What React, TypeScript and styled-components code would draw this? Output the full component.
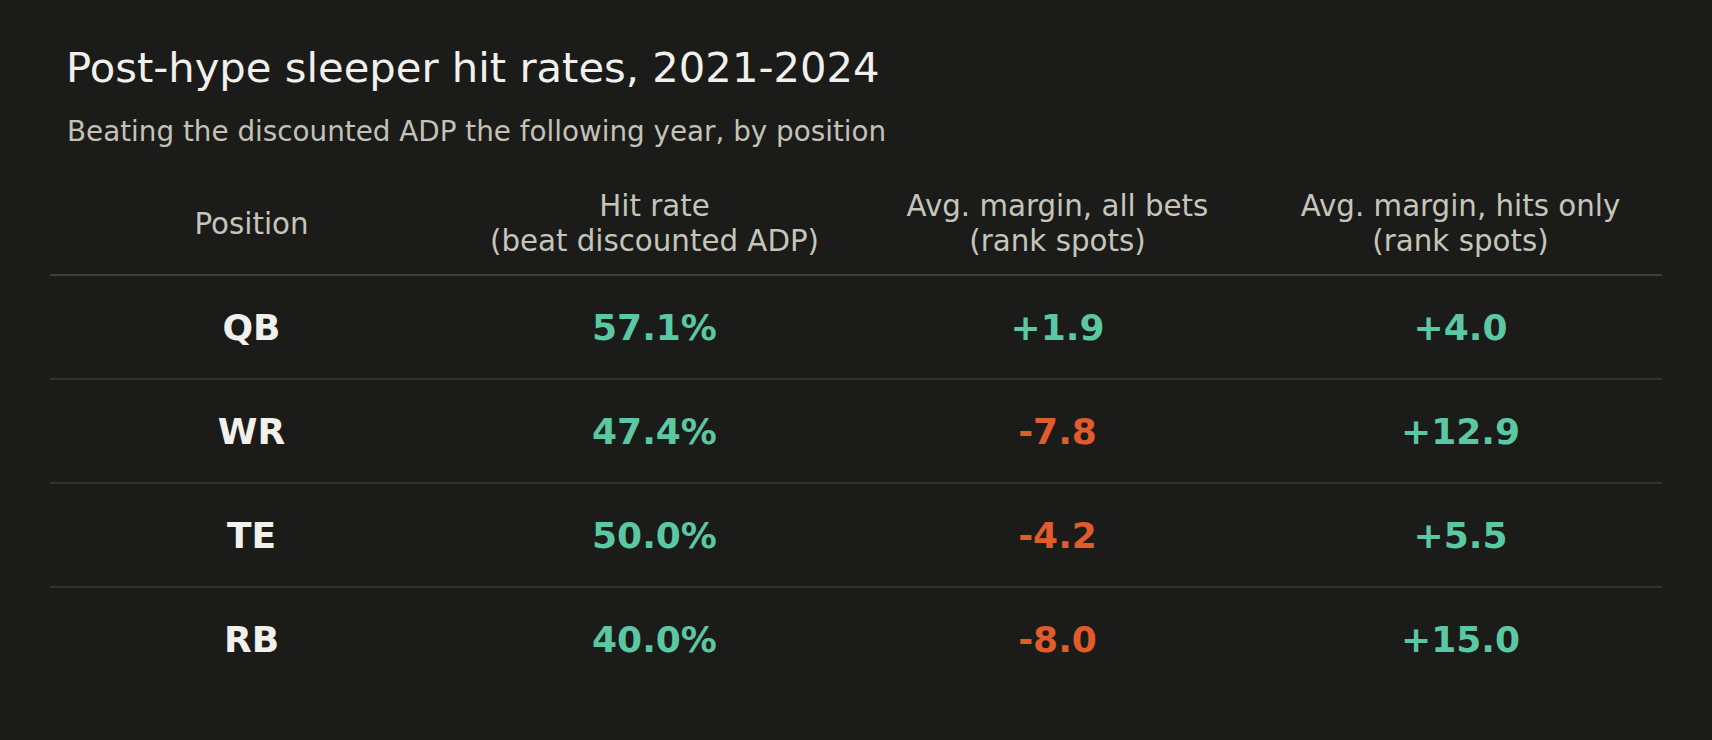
import styled, { createGlobalStyle } from 'styled-components';

type Tone = 'up' | 'down';

const rows: { position: string; hitRate: string; allBets: string; hitsOnly: string }[] = [
  { position: 'QB', hitRate: '57.1%', allBets: '+1.9', hitsOnly: '+4.0' },
  { position: 'WR', hitRate: '47.4%', allBets: '-7.8', hitsOnly: '+12.9' },
  { position: 'TE', hitRate: '50.0%', allBets: '-4.2', hitsOnly: '+5.5' },
  { position: 'RB', hitRate: '40.0%', allBets: '-8.0', hitsOnly: '+15.0' },
];

const toneOf = (value: string): Tone => (value.startsWith('-') ? 'down' : 'up');

const App: React.FC = () => {
  return (
    <Page>
      <GlobalStyle />
      <Title>Post-hype sleeper hit rates, 2021-2024</Title>
      <Subtitle>Beating the discounted ADP the following year, by position</Subtitle>
      <Table>
        <HeaderRow>
          <HeaderCell>Position</HeaderCell>
          <HeaderCell>
            Hit rate
            <br />
            (beat discounted ADP)
          </HeaderCell>
          <HeaderCell>
            Avg. margin, all bets
            <br />
            (rank spots)
          </HeaderCell>
          <HeaderCell>
            Avg. margin, hits only
            <br />
            (rank spots)
          </HeaderCell>
        </HeaderRow>
        {rows.map(row => (
          <Row key={row.position}>
            <PositionCell>{row.position}</PositionCell>
            <ValueCell $tone="up">{row.hitRate}</ValueCell>
            <ValueCell $tone={toneOf(row.allBets)}>{row.allBets}</ValueCell>
            <ValueCell $tone={toneOf(row.hitsOnly)}>{row.hitsOnly}</ValueCell>
          </Row>
        ))}
      </Table>
    </Page>
  );
};

export default App;

const GlobalStyle = createGlobalStyle`
  html, body {
    margin: 0;
    padding: 0;
    background: #1b1b1a;
  }
  body {
    font-family: 'DejaVu Sans', 'Liberation Sans', sans-serif;
  }
`;

const Page = styled.main`
  width: 1712px;
  height: 740px;
  box-sizing: border-box;
  padding: 43px 50px 0;
  background: #1b1b1a;
  overflow: hidden;
`;

const Title = styled.h1`
  margin: 0;
  padding-left: 16px;
  font-size: 41.7px;
  line-height: 50px;
  font-weight: normal;
  color: #f1f0ec;
`;

const Subtitle = styled.p`
  margin: 23px 0 0;
  padding-left: 17px;
  font-size: 27.8px;
  line-height: 32px;
  color: #c3c2b7;
`;

const Table = styled.section`
  margin-top: 24px;
  display: grid;
  grid-template-columns: repeat(4, 1fr);
`;

const HeaderRow = styled.div`
  display: contents;
`;

const HeaderCell = styled.div`
  display: flex;
  align-items: center;
  justify-content: center;
  padding: 17px 0 15px;
  border-bottom: 2px solid #3d3d3b;
  font-size: 29.3px;
  line-height: 35px;
  text-align: center;
  color: #c6c5ba;
`;

const Row = styled.div`
  display: contents;

  &:last-child > div {
    border-bottom-color: transparent;
  }
`;

const Cell = styled.div`
  padding: 32px 0 30px;
  border-bottom: 2px solid #333331;
  font-size: 36px;
  line-height: 40px;
  font-weight: bold;
  text-align: center;
`;

const PositionCell = styled(Cell)`
  color: #f1f0eb;
`;

const ValueCell = styled(Cell)<{ $tone: Tone }>`
  color: ${({ $tone }) => ($tone === 'up' ? '#5bc8a3' : '#e05c2c')};
`;
